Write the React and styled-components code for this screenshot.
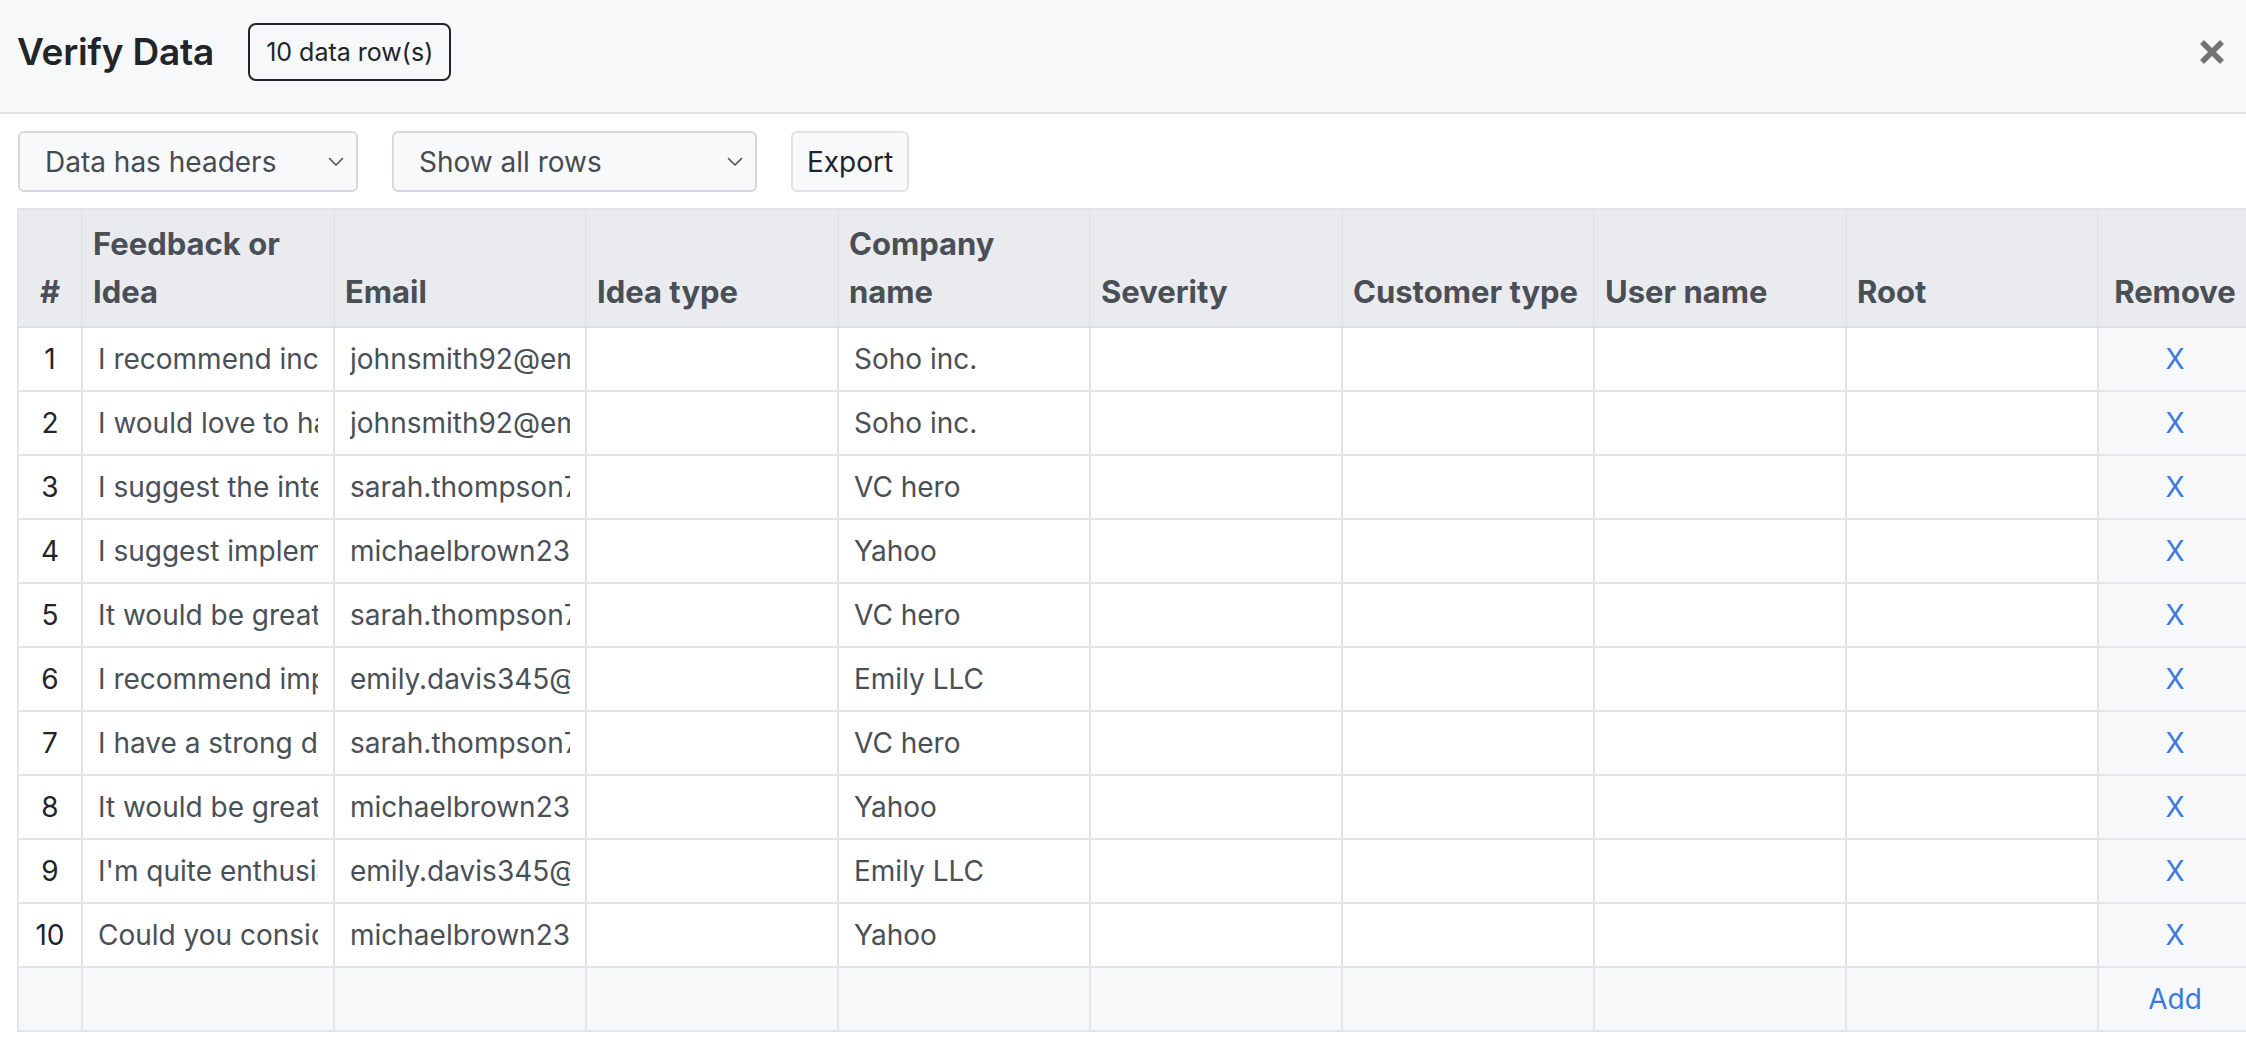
import React from "react";
import styled, { createGlobalStyle } from "styled-components";

const GlobalStyle = createGlobalStyle`
  html, body { margin: 0; padding: 0; background: #ffffff; }
  body { font-family: Inter, "Noto Sans", "Liberation Sans", sans-serif; color: #212529; }
  * { box-sizing: border-box; }
`;

const Page = styled.div`
  width: 2246px;
  height: 1048px;
  overflow: hidden;
  background: #ffffff;
`;

const Header = styled.header`
  height: 114px;
  display: flex;
  align-items: center;
  padding: 0 19px 8px 17px;
  background: #f7f8fa;
  border-bottom: 2px solid #dee2e6;
`;

const Title = styled.h1`
  margin: 0;
  font-size: 37px;
  font-weight: 600;
  line-height: 1.2;
  color: #212529;
  letter-spacing: -0.2px;
`;

const Badge = styled.span`
  margin-left: 34px;
  padding: 9px 16px;
  border: 2px solid #212529;
  border-radius: 8px;
  font-size: 25px;
  line-height: 36px;
  color: #212529;
`;

const CloseButton = styled.button`
  margin-left: auto;
  width: 30px;
  height: 30px;
  padding: 0;
  border: 0;
  background: transparent;
  display: flex;
  align-items: center;
  justify-content: center;
  cursor: pointer;
`;

const Toolbar = styled.div`
  display: flex;
  align-items: center;
  gap: 34px;
  padding: 17px 18px 16px 18px;
`;

const SelectBox = styled.div`
  width: ${(p) => p.$width}px;
  height: 61px;
  display: flex;
  align-items: center;
  justify-content: space-between;
  padding: 0 12px 0 25px;
  border: 2px solid #d5d8dc;
  border-radius: 6px;
  background: #f8f9fa;
  font-size: 28px;
  color: #464b52;
`;

const Button = styled.button`
  height: 61px;
  padding: 0 14px;
  border: 2px solid #dfe2e6;
  border-radius: 6px;
  background: #f8f9fa;
  font-family: inherit;
  font-size: 28px;
  color: #212529;
`;

const TableWrap = styled.div`
  padding: 0 0 0 17px;
  overflow: hidden;
`;

const Table = styled.table`
  table-layout: fixed;
  width: 2234px;
  border-collapse: collapse;
  border: 2px solid #e2e4e8;
`;

const Th = styled.th`
  padding: 10px 10px;
  background: #e9ebef;
  border: 2px solid #e2e4e8;
  border-bottom-color: #dcdee3;
  font-size: 31px;
  line-height: 48px;
  font-weight: 700;
  color: #4a4f56;
  text-align: ${(p) => (p.$center ? "center" : "left")};
  vertical-align: bottom;
`;

const Td = styled.td`
  padding: 10px 15px;
  border: 2px solid #e2e4e8;
  background: ${(p) => (p.$shade ? "#f7f8fa" : "#ffffff")};
  font-size: 28px;
  line-height: 42px;
  color: ${(p) => (p.$dark ? "#212529" : "#495057")};
  text-align: ${(p) => (p.$center ? "center" : "left")};
  vertical-align: middle;
`;

const NumTd = styled(Td)`
  padding: 10px 4px;
`;

const CellText = styled.div`
  height: 42px;
  white-space: nowrap;
  overflow: hidden;
`;

const LinkText = styled.a`
  color: #3a7bdc;
  text-decoration: none;
  cursor: pointer;
`;

const Chevron = () => (
  <svg width="16" height="10" viewBox="0 0 16 10" fill="none">
    <path d="M1.5 1.5 L8 8 L14.5 1.5" stroke="#4a4f56" strokeWidth="1.6" strokeLinecap="round" strokeLinejoin="round" />
  </svg>
);

const CloseIcon = () => (
  <svg width="26" height="26" viewBox="0 0 26 26">
    <path d="M3 3 L23 23 M23 3 L3 23" stroke="#737373" strokeWidth="5.5" strokeLinecap="butt" />
  </svg>
);

const columns = [
  "Feedback or Idea",
  "Email",
  "Idea type",
  "Company name",
  "Severity",
  "Customer type",
  "User name",
  "Root",
];

const rows = [
  ["I recommend incorporating a dark mode option", "johnsmith92@email.com", "Soho inc."],
  ["I would love to have an offline mode", "johnsmith92@email.com", "Soho inc."],
  ["I suggest the integration of a calendar", "sarah.thompson78@email.com", "VC hero"],
  ["I suggest implementing two-factor auth", "michaelbrown23@email.com", "Yahoo"],
  ["It would be great to have keyboard shortcuts", "sarah.thompson78@email.com", "VC hero"],
  ["I recommend implementing a search filter", "emily.davis345@email.com", "Emily LLC"],
  ["I have a strong desire for an export feature", "sarah.thompson78@email.com", "VC hero"],
  ["It would be great if notifications were grouped", "michaelbrown23@email.com", "Yahoo"],
  ["I'm quite enthusiastic about the new editor", "emily.davis345@email.com", "Emily LLC"],
  ["Could you consider adding bulk actions", "michaelbrown23@email.com", "Yahoo"],
];

export default function App() {
  return (
    <Page>
      <GlobalStyle />
      <Header>
        <Title>Verify Data</Title>
        <Badge>10 data row(s)</Badge>
        <CloseButton aria-label="Close">
          <CloseIcon />
        </CloseButton>
      </Header>
      <Toolbar>
        <SelectBox $width={340}>
          <span>Data has headers</span>
          <Chevron />
        </SelectBox>
        <SelectBox $width={365}>
          <span>Show all rows</span>
          <Chevron />
        </SelectBox>
        <Button>Export</Button>
      </Toolbar>
      <TableWrap>
        <Table>
          <colgroup>
            <col style={{ width: 64 }} />
            {columns.map((c) => (
              <col key={c} style={{ width: 252 }} />
            ))}
            <col style={{ width: 154 }} />
          </colgroup>
          <thead>
            <tr>
              <Th $center>#</Th>
              {columns.map((c) => (
                <Th key={c}>{c}</Th>
              ))}
              <Th $center>Remove</Th>
            </tr>
          </thead>
          <tbody>
            {rows.map((r, i) => (
              <tr key={i}>
                <NumTd $center $dark>
                  <CellText>{i + 1}</CellText>
                </NumTd>
                <Td>
                  <CellText>{r[0]}</CellText>
                </Td>
                <Td>
                  <CellText>{r[1]}</CellText>
                </Td>
                <Td />
                <Td>
                  <CellText>{r[2]}</CellText>
                </Td>
                <Td />
                <Td />
                <Td />
                <Td />
                <Td $center $shade>
                  <CellText>
                    <LinkText>X</LinkText>
                  </CellText>
                </Td>
              </tr>
            ))}
            <tr>
              <Td $shade />
              {columns.map((c) => (
                <Td key={c} $shade />
              ))}
              <Td $center $shade>
                <CellText>
                  <LinkText>Add</LinkText>
                </CellText>
              </Td>
            </tr>
          </tbody>
        </Table>
      </TableWrap>
    </Page>
  );
}
